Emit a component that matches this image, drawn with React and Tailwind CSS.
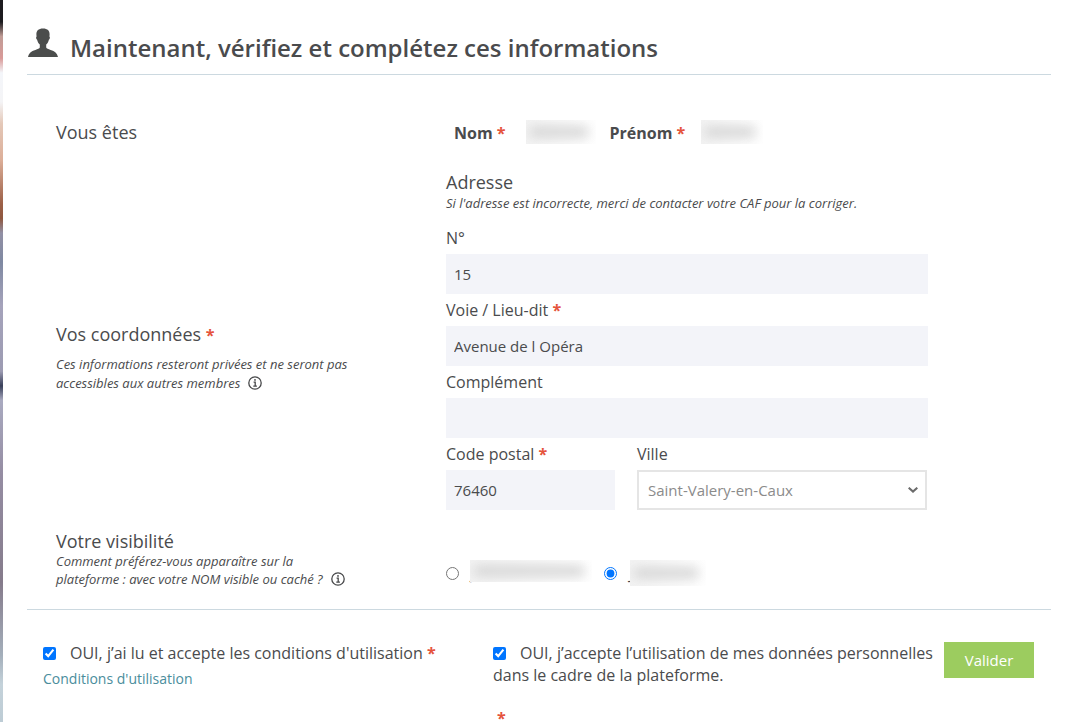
import React, { useState } from "react";

const Required = () => (
  <span className="text-[16px] font-bold text-[#e5533c]">*</span>
);

const InfoIcon = () => (
  <svg
    viewBox="0 0 14 14"
    className="ml-2 inline-block h-3.5 w-3.5 align-[-2px]"
    fill="none"
    stroke="#47484a"
  >
    <circle cx="7" cy="7" r="6.2" strokeWidth="1.3" />
    <path d="M5.6 6.1h1.6v4M5.3 10.2h3.6" strokeWidth="1.3" />
    <circle cx="7" cy="3.9" r="0.9" fill="#47484a" stroke="none" />
  </svg>
);

const UserIcon = () => (
  <svg viewBox="0 0 30 30" className="h-[30px] w-[30px]" fill="#4b4d4c">
    <path d="M15 0.5c-4.6 0-6.7 2.2-6.6 6.3l.2 1.7c-.8.2-.6 2.6.5 3.3.5 2.3 1.6 3.8 2.7 4.8v3c-.4 1-2 1.5-4.4 2.3C3.2 23.200.8 25 0 29h30c-.8-4-3.200-5.800-7.400-7.100-2.400-.8-4-1.300-4.400-2.300v-3c1.100-1 2.200-2.500 2.700-4.800 1.100-.7 1.300-3.100.5-3.300l.2-1.700C21.700 2.700 19.600.5 15 .5z" />
  </svg>
);

const Masked = ({ className }) => (
  <span
    aria-hidden="true"
    className={`relative flex items-center overflow-hidden bg-linear-to-r from-[#f3f3f3] to-white pr-2 pl-1 ${className}`}
  >
    <span className="h-2.5 w-full bg-[#d2d2d2] blur-[6px]" />
  </span>
);

const Field = ({ id, label, required, value, onChange }) => (
  <div>
    <label htmlFor={id} className="block text-base leading-8">
      {label} {required && <Required />}
    </label>
    <input
      id={id}
      type="text"
      value={value}
      onChange={onChange}
      className="block h-10 w-full bg-[#f3f4f9] px-2 text-[15px] outline-none"
    />
  </div>
);

const App = () => {
  const [address, setAddress] = useState({
    numero: "15",
    voie: "Avenue de l Opéra",
    complement: "",
    codePostal: "76460",
  });
  const [visibility, setVisibility] = useState("short");
  const [terms, setTerms] = useState(true);
  const [privacy, setPrivacy] = useState(true);

  const update = (key) => (e) =>
    setAddress({ ...address, [key]: e.target.value });

  return (
    <div className="flex min-h-screen bg-white font-['Open_Sans','Liberation_Sans',sans-serif] text-[#4a4b4d]">
      <div className="w-[3px] shrink-0 bg-[linear-gradient(#1c1b1f_0%,#1c1b1f_3%,#c09c96_5%,#d99a98_8%,#f4f6fa_10%,#f4f4f6_14%,#e4c8b8_17%,#dcae98_22%,#9c6047_28%,#8f573f_30%,#9290a5_32%,#7f89a2_36%,#a5a3bb_42%,#9c9bb2_51%,#39405a_53%,#a9aac0_55%,#958da3_65%,#857b8b_80%,#a4afbb_90%,#c4d2da_94%,#bccbd4_100%)]" />

      <form
        className="min-w-0 flex-1 pr-[19px] pl-6"
        onSubmit={(e) => e.preventDefault()}
      >
        <header className="flex h-[75px] items-start gap-3 border-b border-[#ccd9e0] pt-7 pl-px">
          <UserIcon />
          <h1 className="text-2xl leading-10 font-semibold">
            Maintenant, vérifiez et complétez ces informations
          </h1>
        </header>

        <div className="grid grid-cols-[390px_minmax(0,1fr)] pt-[45px] pr-[123px] pl-[29px]">
          <h2 className="text-lg leading-6">Vous êtes</h2>
          <div className="flex h-[51px] items-start pl-2 text-base leading-[26px] font-bold">
            <span>
              Nom <Required />
            </span>
            <Masked className="ml-5 h-6 w-[70px]" />
            <span className="ml-[14px]">
              Prénom <Required />
            </span>
            <Masked className="ml-4 h-6 w-[62px]" />
          </div>

          <div className="pt-[151px]">
            <h2 className="text-lg leading-6">
              Vos coordonnées <Required />
            </h2>
            <p className="max-w-[300px] pt-2 text-[13px] leading-[19px] italic">
              Ces informations resteront privées et ne seront pas accessibles
              aux autres membres
              <InfoIcon />
            </p>
          </div>
          <div>
            <h3 className="text-lg leading-[22px]">Adresse</h3>
            <p className="pb-[9px] text-[13px] leading-5 italic">
              Si l'adresse est incorrecte, merci de contacter votre CAF pour la
              corriger.
            </p>
            <Field
              id="numero"
              label="N°"
              value={address.numero}
              onChange={update("numero")}
            />
            <Field
              id="voie"
              label="Voie / Lieu-dit"
              required
              value={address.voie}
              onChange={update("voie")}
            />
            <Field
              id="complement"
              label="Complément"
              value={address.complement}
              onChange={update("complement")}
            />
            <div className="grid grid-cols-[169px_minmax(0,1fr)] gap-[22px]">
              <Field
                id="code-postal"
                label="Code postal"
                required
                value={address.codePostal}
                onChange={update("codePostal")}
              />
              <div className="pr-px">
                <label htmlFor="ville" className="block text-base leading-8">
                  Ville
                </label>
                <div className="relative">
                  <select
                    id="ville"
                    className="block h-10 w-full appearance-none border-2 border-[#e5e5e5] bg-white pr-8 pl-[9px] text-[15px] text-[#8b8b8b] outline-none"
                  >
                    <option>Saint-Valery-en-Caux</option>
                  </select>
                  <svg
                    viewBox="0 0 10 6"
                    className="pointer-events-none absolute top-[17px] right-[9px] h-1.5 w-2.5"
                    fill="none"
                    stroke="#6b6b6b"
                    strokeWidth="2"
                  >
                    <path d="M0.7 0.7 5 4.6 9.3 0.7" />
                  </svg>
                </div>
              </div>
            </div>
          </div>

          <div className="pt-5">
            <h2 className="text-lg leading-[22px]">Votre visibilité</h2>
            <p className="max-w-[300px] text-[13px] leading-[18px] italic">
              Comment préférez-vous apparaître sur la
              <br />
              plateforme : avec votre NOM visible ou caché ?
              <InfoIcon />
            </p>
          </div>
          <div className="flex items-center pt-12">
            <label className="flex items-center text-base leading-6">
              <input
                type="radio"
                name="visibility"
                aria-label="Nom visible"
                className="mr-3 h-[13px] w-[13px]"
                checked={visibility === "full"}
                onChange={() => setVisibility("full")}
              />
              J
              <Masked className="-ml-[5px] mb-1 h-[22px] w-[122px]" />
            </label>
            <label className="ml-3 flex items-center text-base leading-6">
              <input
                type="radio"
                name="visibility"
                aria-label="Nom caché"
                className="mr-3 h-[13px] w-[13px]"
                checked={visibility === "short"}
                onChange={() => setVisibility("short")}
              />
              J
              <Masked className="-ml-1 h-[26px] w-[76px]" />
            </label>
          </div>
        </div>

        <footer className="mt-[21px] flex items-start border-t border-[#ccd9e0] pt-8 pr-[17px] pl-4">
          <div className="w-[450px] shrink-0">
            <label className="block text-base leading-[22px]">
              <input
                type="checkbox"
                className="mr-3.5 h-[13px] w-[13px] align-[-1px]"
                checked={terms}
                onChange={(e) => setTerms(e.target.checked)}
              />
              OUI, j’ai lu et accepte les conditions d'utilisation <Required />
            </label>
            <a
              href="#conditions"
              className="mt-1 block text-sm leading-[22px] text-[#4a8d9c]"
            >
              Conditions d'utilisation
            </a>
          </div>
          <div className="min-w-0 flex-1">
            <label className="block text-base leading-[22px]">
              <input
                type="checkbox"
                className="mr-3.5 h-[13px] w-[13px] align-[-1px]"
                checked={privacy}
                onChange={(e) => setPrivacy(e.target.checked)}
              />
              OUI, j’accepte l’utilisation de mes données personnelles dans le
              cadre de la plateforme.
            </label>
            <p className="pt-[22px] pl-1 text-base leading-5">
              <Required />
            </p>
          </div>
          <button
            type="submit"
            className="h-9 w-[90px] shrink-0 bg-[#9ccc5f] text-[15px] font-medium text-white"
          >
            Valider
          </button>
        </footer>
      </form>
    </div>
  );
};

export default App;
